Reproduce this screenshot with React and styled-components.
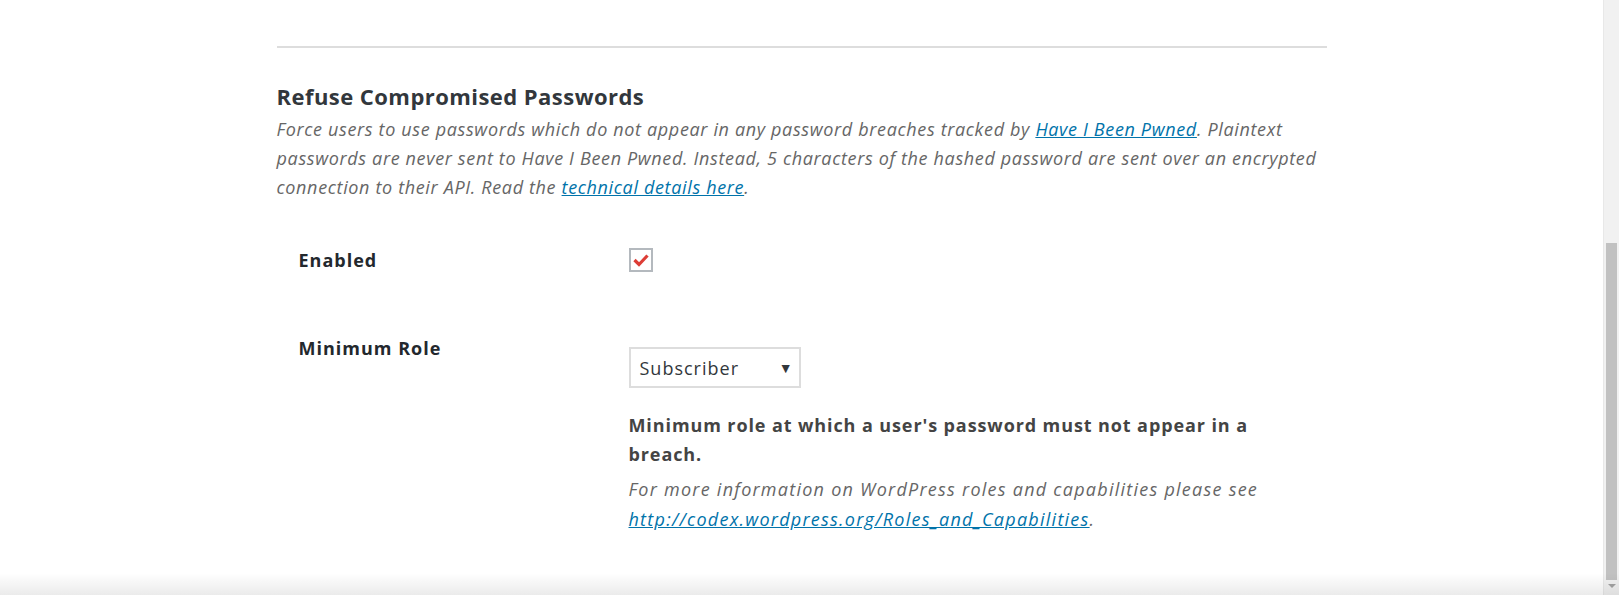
import React from 'react';
import styled, { createGlobalStyle } from 'styled-components';

const GlobalStyle = createGlobalStyle`
  html, body {
    margin: 0;
    padding: 0;
    height: 100%;
    overflow: hidden;
    background: #fff;
  }
  body {
    font-family: "Open Sans", "Noto Sans", sans-serif;
    color: #444;
  }
`;

const Page = styled.div`
  display: flex;
  height: 595px;
  position: relative;
`;

const Main = styled.div`
  flex: 1;
  overflow: hidden;
`;

const Content = styled.div`
  max-width: 1050px;
  margin: 0 auto;
  padding-top: 46px;
`;

const Rule = styled.hr`
  border: 0;
  border-top: 2px solid #ddd;
  margin: 0;
`;

const Title = styled.h2`
  font-size: 22px;
  font-weight: 700;
  letter-spacing: 0.45px;
  color: #32373c;
  margin: 33px 0 4px;
  line-height: 30px;
`;

const Description = styled.p`
  font-size: 18px;
  font-style: italic;
  letter-spacing: 0.65px;
  color: #666;
  line-height: 29px;
  margin: 0;
`;

const Link = styled.a`
  color: #0073aa;
  text-decoration: underline;
`;

const Table = styled.div`
  display: flex;
  flex-direction: column;
  margin-top: 30px;
`;

const Row = styled.div`
  display: grid;
  grid-template-columns: 352px 1fr;
  padding: ${p => p.$pad || '20px 0'};
`;

const Label = styled.div`
  padding-left: 22px;
  font-size: 18px;
  font-weight: 700;
  letter-spacing: 1px;
  color: #23282d;
  line-height: 24px;
  padding-top: ${p => p.$top || '0'};
`;

const Field = styled.div`
  display: flex;
  flex-direction: column;
  align-items: flex-start;
  padding-top: ${p => p.$top || '0'};
`;

const Checkbox = styled.span`
  width: 20px;
  height: 20px;
  border: 2px solid #b4b9be;
  background: #fff;
  display: flex;
  align-items: center;
  justify-content: center;
`;

const Select = styled.div`
  box-sizing: border-box;
  width: 172px;
  height: 41px;
  border: 2px solid #ddd;
  display: flex;
  align-items: center;
  justify-content: space-between;
  padding: 0 6px 0 9px;
  font-size: 18px;
  letter-spacing: 1px;
  color: #32373c;
`;

const Arrow = styled.span`
  font-size: 14px;
  letter-spacing: 0;
  color: #32373c;
`;

const Strong = styled.p`
  font-size: 18px;
  font-weight: 700;
  letter-spacing: 0.9px;
  color: #444;
  line-height: 29px;
  margin: 23px 0 0;
  max-width: 650px;
`;

const Note = styled(Description)`
  margin-top: 5px;
  line-height: 30px;
  letter-spacing: 1.25px;
  max-width: 650px;
`;

const Scrollbar = styled.div`
  width: 15px;
  background: #f1f1f1;
  border-left: 1px solid #e8e8e8;
  display: flex;
  flex-direction: column;
  align-items: center;
`;

const Thumb = styled.div`
  width: 11px;
  margin-top: 243px;
  height: 337px;
  background: #c1c1c1;
`;

const ScrollArrow = styled.div`
  width: 0;
  height: 0;
  margin-top: 4px;
  border-left: 4px solid transparent;
  border-right: 4px solid transparent;
  border-top: 4px solid #a3a3a3;
`;

const BottomShade = styled.div`
  position: absolute;
  left: 0;
  right: 0;
  bottom: 0;
  height: 22px;
  background: linear-gradient(to bottom, rgba(0,0,0,0), rgba(0,0,0,0.08));
  pointer-events: none;
`;

const Check = () => (
  <svg width="16" height="14" viewBox="0 0 16 14">
    <path d="M1.5 7 L6 11.5 L14.5 2.5" fill="none" stroke="#dd3d36" strokeWidth="3.2" />
  </svg>
);

export default function App() {
  return (
    <Page>
      <GlobalStyle />
      <Main>
        <Content>
          <Rule />
          <Title>Refuse Compromised Passwords</Title>
          <Description>
            Force users to use passwords which do not appear in any password breaches tracked by{' '}
            <Link href="#">Have I Been Pwned</Link>. Plaintext passwords are never sent to Have I Been Pwned.
            Instead, 5 characters of the hashed password are sent over an encrypted connection to their API.
            Read the <Link href="#">technical details here</Link>.
          </Description>
          <Table>
            <Row $pad="16px 0 60px">
              <Label>Enabled</Label>
              <Field>
                <Checkbox><Check /></Checkbox>
              </Field>
            </Row>
            <Row $pad="0">
              <Label $top="4px">Minimum Role</Label>
              <Field $top="15px">
                <Select>
                  Subscriber <Arrow>▼</Arrow>
                </Select>
                <Strong>Minimum role at which a user's password must not appear in a breach.</Strong>
                <Note>
                  For more information on WordPress roles and capabilities please see{' '}
                  <Link href="#">http://codex.wordpress.org/Roles_and_Capabilities</Link>.
                </Note>
              </Field>
            </Row>
          </Table>
        </Content>
      </Main>
      <Scrollbar>
        <Thumb />
        <ScrollArrow />
      </Scrollbar>
      <BottomShade />
    </Page>
  );
}
